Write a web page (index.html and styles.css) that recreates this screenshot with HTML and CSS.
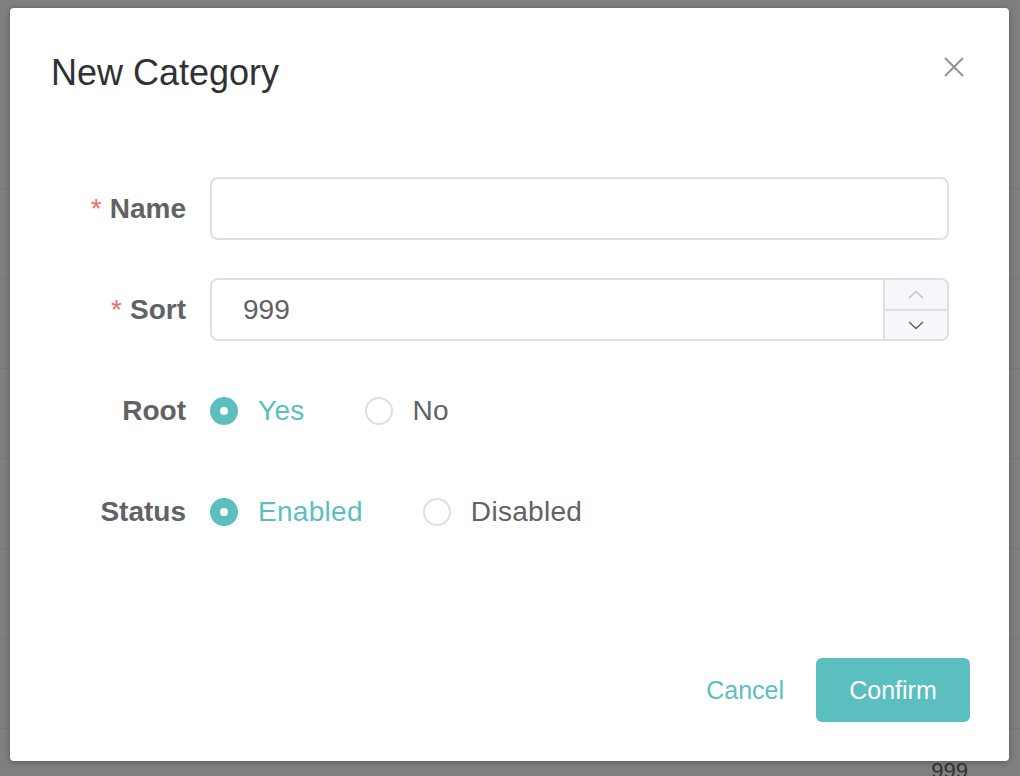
FILE: index.html
```html
<!DOCTYPE html>
<html>
<head>
<meta charset="utf-8">
<title>New Category</title>
<link rel="stylesheet" href="styles.css">
</head>
<body>
<div class="page">
  <div class="table">
    <div class="tr"></div>
    <div class="tr"></div>
    <div class="tr"></div>
    <div class="tr"></div>
    <div class="tr"></div>
    <div class="tr"></div>
    <div class="tr"></div>
    <div class="tr tr-last"><span class="cell-num">999</span></div>
  </div>
</div>
<div class="overlay">
  <div class="dialog">
    <div class="dialog-header">
      <span class="dialog-title">New Category</span>
      <button class="dialog-close" aria-label="Close">
        <svg width="20" height="20" viewBox="0 0 20 20"><path d="M1 1 L19 19 M19 1 L1 19" stroke="#909399" stroke-width="2" fill="none"/></svg>
      </button>
    </div>
    <form class="form">
      <div class="form-item">
        <label class="form-label"><span class="req">*</span>Name</label>
        <div class="form-control">
          <div class="input"></div>
        </div>
      </div>
      <div class="form-item">
        <label class="form-label"><span class="req">*</span>Sort</label>
        <div class="form-control">
          <div class="input input-number">
            <span class="input-value">999</span>
            <div class="spin">
              <span class="spin-btn spin-up">
                <svg width="16" height="9" viewBox="0 0 16 9"><polyline points="1,8 8,1.5 15,8" fill="none" stroke="#c0c4cc" stroke-width="1.5"/></svg>
              </span>
              <span class="spin-btn spin-down">
                <svg width="16" height="9" viewBox="0 0 16 9"><polyline points="1,1 8,7.5 15,1" fill="none" stroke="#606266" stroke-width="1.5"/></svg>
              </span>
            </div>
          </div>
        </div>
      </div>
      <div class="form-item">
        <label class="form-label">Root</label>
        <div class="form-control radios">
          <span class="radio checked"><span class="radio-dot"></span><span class="radio-text">Yes</span></span>
          <span class="radio"><span class="radio-dot"></span><span class="radio-text">No</span></span>
        </div>
      </div>
      <div class="form-item">
        <label class="form-label">Status</label>
        <div class="form-control radios">
          <span class="radio checked"><span class="radio-dot"></span><span class="radio-text">Enabled</span></span>
          <span class="radio"><span class="radio-dot"></span><span class="radio-text">Disabled</span></span>
        </div>
      </div>
    </form>
    <div class="dialog-footer">
      <button class="btn btn-text">Cancel</button>
      <button class="btn btn-primary">Confirm</button>
    </div>
  </div>
</div>
</body>
</html>
```
FILE: styles.css
```css
* { box-sizing: border-box; }
html, body {
  margin: 0;
  padding: 0;
  width: 1020px;
  height: 776px;
  overflow: hidden;
  font-family: "Liberation Sans", Arial, "Helvetica Neue", sans-serif;
  background: #ffffff;
}
.page {
  position: relative;
  width: 1020px;
  height: 776px;
  overflow: hidden;
}
.table {
  padding-top: 99px;
}
.tr {
  height: 90px;
  border-bottom: 1px solid #ebeef5;
}
.tr-last {
  display: flex;
  justify-content: flex-end;
  align-items: flex-start;
  padding: 31px 52px 0 0;
}
.cell-num {
  font-size: 22px;
  line-height: 22px;
  color: #606266;
}
.overlay {
  position: absolute;
  inset: 0;
  background: rgba(0, 0, 0, 0.5);
  padding: 8px 11px 0 10px;
}
.dialog {
  position: relative;
  width: 999px;
  height: 753px;
  background: #ffffff;
  border-radius: 4px;
  box-shadow: 0 1px 6px rgba(0, 0, 0, 0.3);
  display: flex;
  flex-direction: column;
}
.dialog-header {
  padding: 45px 40px 0 41px;
  height: 82px;
}
.dialog-title {
  font-size: 36px;
  line-height: 40px;
  color: #303133;
}
.dialog-close {
  position: absolute;
  top: 49px;
  right: 45px;
  width: 20px;
  height: 20px;
  padding: 0;
  border: none;
  background: none;
  display: flex;
}
.form {
  margin: 87px 0 0 0;
  display: flex;
  flex-direction: column;
  gap: 38px;
}
.form-item {
  display: flex;
  align-items: center;
  height: 63px;
}
.form-label {
  width: 200px;
  padding-right: 24px;
  text-align: right;
  font-size: 28px;
  font-weight: bold;
  color: #606266;
  line-height: 63px;
}
.req {
  color: #f56c6c;
  margin-right: 8px;
  font-weight: normal;
  font-size: 28px;
}
.form-control {
  flex: 1;
  margin-right: 60px;
  height: 63px;
  display: flex;
  align-items: center;
}
.input {
  width: 100%;
  height: 63px;
  border: 2px solid #dcdfe6;
  border-radius: 8px;
  background: #fff;
}
.input-number {
  display: flex;
  align-items: stretch;
  overflow: hidden;
}
.input-value {
  flex: 1;
  padding-left: 31px;
  font-size: 28px;
  line-height: 59px;
  color: #606266;
}
.spin {
  width: 64px;
  border-left: 2px solid #dcdfe6;
  background: #f5f7fa;
  display: flex;
  flex-direction: column;
}
.spin-btn {
  flex: 1;
  display: flex;
  align-items: center;
  justify-content: center;
}
.spin-up {
  border-bottom: 2px solid #dcdfe6;
}
.spin-up svg { margin-top: 1px; }
.spin-down svg { margin-top: 1px; }
.radios {
  gap: 0;
}
.radio {
  display: inline-flex;
  align-items: center;
  margin-right: 60px;
}
.radio-dot {
  width: 28px;
  height: 28px;
  border-radius: 50%;
  border: 2px solid #dcdfe6;
  background: #fff;
  display: flex;
  align-items: center;
  justify-content: center;
}
.radio.checked .radio-dot {
  border-color: #5bbfbf;
  background: #5bbfbf;
}
.radio.checked .radio-dot::after {
  content: "";
  width: 8px;
  height: 8px;
  border-radius: 50%;
  background: #fff;
}
.radio-text {
  margin-left: 20px;
  font-size: 28px;
  letter-spacing: 0.3px;
  color: #606266;
}
.radio.checked .radio-text {
  color: #5bbfbf;
}
.dialog-footer {
  margin-top: auto;
  padding: 0 39px 39px 0;
  display: flex;
  justify-content: flex-end;
  align-items: center;
}
.btn {
  font-family: "Liberation Sans", Arial, sans-serif;
  font-size: 25px;
  border: none;
  background: none;
  cursor: pointer;
}
.btn-text {
  color: #5bbfbf;
  padding: 0;
  margin-right: 32px;
}
.btn-primary {
  width: 154px;
  height: 64px;
  border-radius: 6px;
  background: #5bbfbf;
  color: #ffffff;
  padding: 0;
}
```
